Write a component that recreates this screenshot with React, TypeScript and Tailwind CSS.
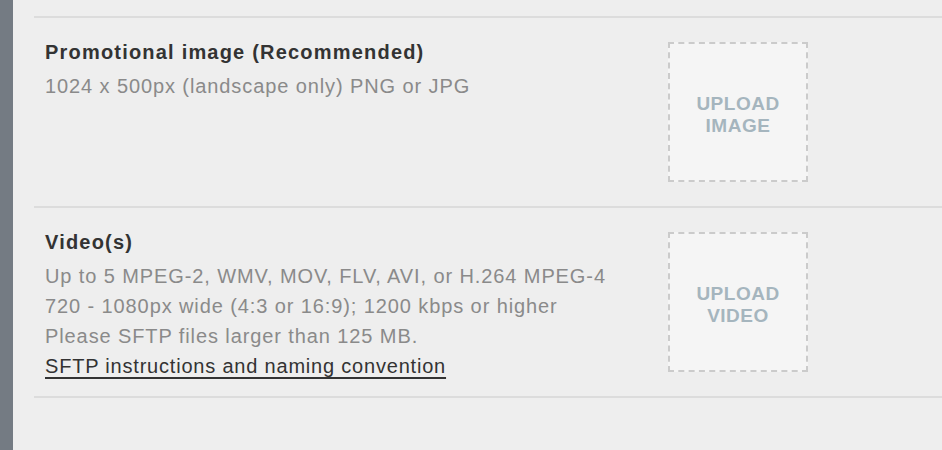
import React from "react";

const font = { fontFamily: '"Liberation Sans", Arial, Helvetica, sans-serif' };

function UploadBox({ label }: { label: string }) {
  return (
    <div className="w-[140px] h-[140px] shrink-0 border-2 border-dashed border-[#cbcbcb] bg-[#f5f5f5] flex items-center justify-center pt-[6px]">
      <div className="text-center text-[19px] leading-[22px] font-bold tracking-[0.5px] text-[#a5b5be] uppercase">
        <div>Upload</div>
        <div>{label}</div>
      </div>
    </div>
  );
}

export default function App() {
  return (
    <div className="w-[942px] h-[450px] flex bg-[#eeeeee] overflow-hidden" style={font}>
      <div className="w-[13px] shrink-0 bg-[#747b83]" />
      <div className="flex-1 pl-[21px] flex flex-col">
        <div className="h-[16px] shrink-0" />
        <div className="h-[190px] shrink-0 border-t-2 border-[#dcdcdc] pt-6 flex">
          <div className="flex-1 pl-[11px] whitespace-nowrap">
            <div className="text-[20px] leading-[20px] font-bold tracking-[1.2px] text-[#333333]">
              Promotional image (Recommended)
            </div>
            <div className="mt-[9px] text-[20px] leading-[30px] tracking-[0.9px] text-[#8a8a8a]">
              1024 x 500px (landscape only) PNG or JPG
            </div>
          </div>
          <div className="mr-[134px]">
            <UploadBox label="Image" />
          </div>
        </div>
        <div className="h-[190px] shrink-0 border-t-2 border-[#dcdcdc] pt-6 flex">
          <div className="flex-1 pl-[11px] whitespace-nowrap">
            <div className="text-[20px] leading-[20px] font-bold tracking-[1.2px] text-[#333333]">Video(s)</div>
            <div className="mt-[9px] text-[20px] leading-[30px] tracking-[0.9px] text-[#8a8a8a]">
              <div>Up to 5 MPEG-2, WMV, MOV, FLV, AVI, or H.264 MPEG-4</div>
              <div>720 - 1080px wide (4:3 or 16:9); 1200 kbps or higher</div>
              <div>Please SFTP files larger than 125 MB.</div>
              <div>
                <a className="text-[#333333] underline underline-offset-[4px] decoration-[1.5px] tracking-[0.8px]">
                  SFTP instructions and naming convention
                </a>
              </div>
            </div>
          </div>
          <div className="mr-[134px]">
            <UploadBox label="Video" />
          </div>
        </div>
        <div className="border-t-2 border-[#dcdcdc]" />
      </div>
    </div>
  );
}
